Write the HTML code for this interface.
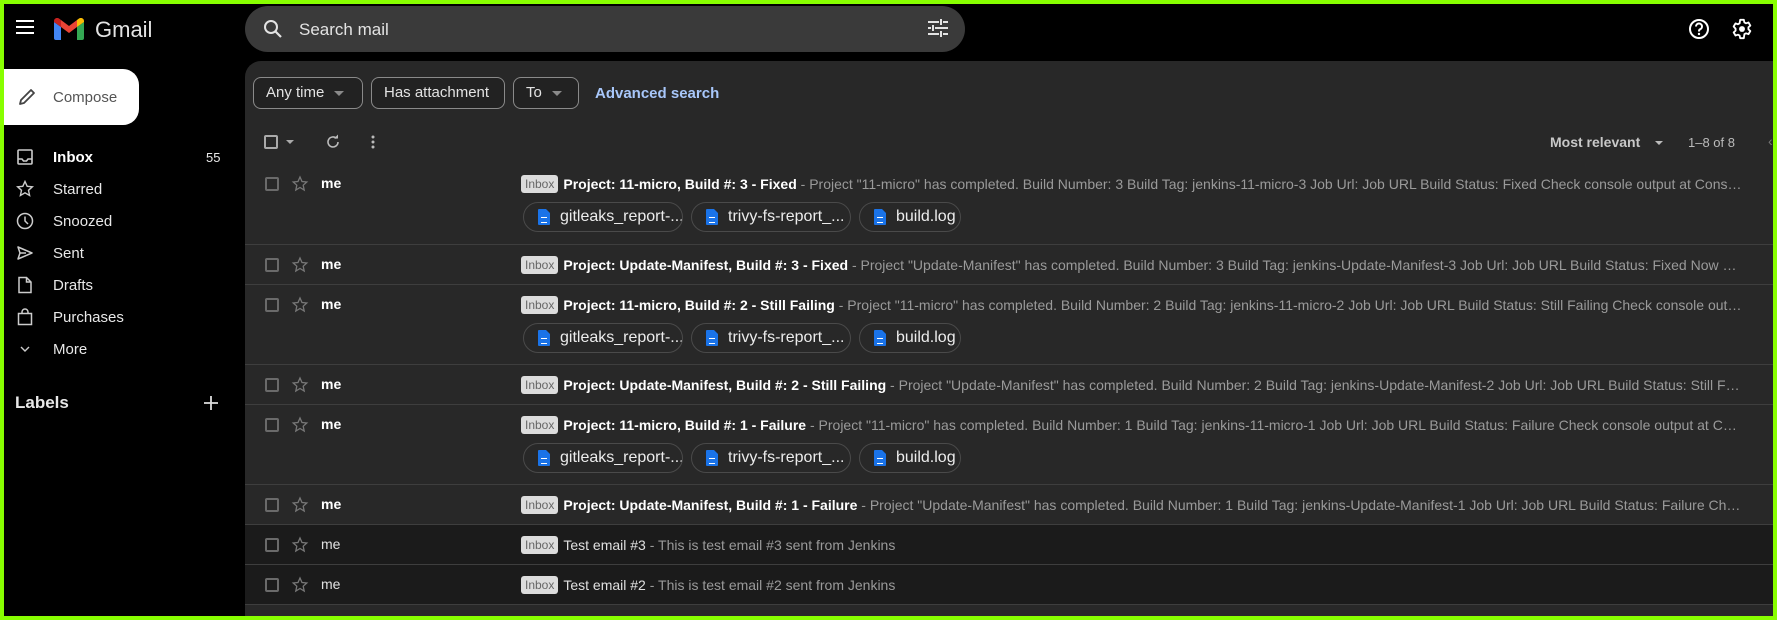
<!DOCTYPE html>
<html><head><meta charset="utf-8"><style>
*{box-sizing:border-box;margin:0;padding:0}
body{width:1777px;height:620px;background:#88ff00;position:relative;overflow:hidden;font-family:"Liberation Sans",Arial,sans-serif}
#app{position:absolute;left:4px;top:4px;width:1769px;height:612px;background:#000;overflow:hidden}
.a{position:absolute}
svg{display:block}
.nav{position:absolute;left:0;height:32px;width:240px;color:#e8e8e8;font-size:15px;line-height:32px}
.nav svg{position:absolute;left:12px;top:6px}
.nav span{position:absolute;left:49px}
#panel{position:absolute;left:241px;top:57px;width:1528px;height:560px;background:#282828;border-radius:16px 0 0 0}
.chip{position:absolute;top:16px;height:32px;border:1px solid #8a8a8a;border-radius:8px;background:#222;color:#e3e3e3;font-size:15px;line-height:30px;padding-left:12px}
.tri{position:absolute;width:0;height:0;border-left:5px solid transparent;border-right:5px solid transparent;border-top:5px solid #8a8a8a}
.row{position:absolute;left:0;width:1528px;border-top:1px solid #3e3e3e;background:#282828}
.row.r{background:#1b1b1b}
.cb{position:absolute;left:20px;top:13px;width:14px;height:14px;border:2px solid #6a6a6a;border-radius:2px}
.st{position:absolute;left:46px;top:11px}
.fr{position:absolute;left:76px;top:11px;font-size:14px;color:#fff;font-weight:bold}
.r .fr{font-weight:normal;color:#e0e0e0}
.ln{position:absolute;left:276px;top:10px;width:1222px;white-space:nowrap;overflow:hidden;text-overflow:ellipsis;font-size:14px;color:#9a9a9a;line-height:20px}
.lb{display:inline-block;background:#dcdcdc;color:#666;border-radius:3px;font-size:12px;line-height:18px;padding:0 4px;margin-right:5px;vertical-align:1px}
.ln b{color:#fff}
.r .ln .s{color:#e0e0e0}
.att{position:absolute;top:38px;height:30px;border:1px solid #4a4a4a;border-radius:15px;color:#ececec;font-size:16px;line-height:28px;padding-left:36px;white-space:nowrap;overflow:hidden}
.att i{position:absolute;left:14px;top:6px;width:12px;height:16px;background:#1a73e8;border-radius:1px}
.att i:before{content:"";position:absolute;right:0;top:0;border-left:4px solid #1a73e8;border-top:4px solid #282828}
.att i:after{content:"";position:absolute;left:3px;top:8px;width:6px;height:4px;border-top:1.5px solid #fff;border-bottom:1.5px solid #fff}
</style></head><body><div id="app">
<svg class="a" style="left:12px;top:16px" width="18" height="14"><path d="M0 1h18M0 7h18M0 13h18" stroke="#fff" stroke-width="2"/></svg>
<svg class="a" style="left:50px;top:14px" width="30" height="22" viewBox="0 0 30 22"><path d="M0 4v16a2 2 0 0 0 2 2h5V9z" fill="#4285f4"/><path d="M23 22h5a2 2 0 0 0 2-2V4l-7 5z" fill="#34a853"/><path d="M23 2v7l7-5V3c0-2.5-3-4-5-2.5z" fill="#fbbc04"/><path d="M7 9V2l8 6 8-6v7l-8 6z" fill="#ea4335"/><path d="M0 3v1l7 5V2L5 .5C3-1 0 .5 0 3z" fill="#c5221f"/></svg>
<div class="a" style="left:91px;top:13px;color:#e3e3e3;font-size:22px">Gmail</div>
<div class="a" style="left:241px;top:2px;width:720px;height:46px;background:#3a3a3a;border-radius:23px"></div>
<svg class="a" style="left:259px;top:15px" width="20" height="20"><circle cx="8" cy="8" r="6" fill="none" stroke="#e3e3e3" stroke-width="2"/><path d="M12.5 12.5L18 18" stroke="#e3e3e3" stroke-width="2.2"/></svg>
<div class="a" style="left:295px;top:16px;color:#e3e3e3;font-size:17px">Search mail</div>
<svg class="a" style="left:924px;top:15px" width="20" height="18"><path d="M0 3h11M15 3h5M13 0v6M0 9h3M7 9h13M5 6v6M0 15h11M15 15h5M13 12v6" stroke="#e3e3e3" stroke-width="2"/></svg>
<svg class="a" style="left:1684px;top:14px" width="22" height="22"><circle cx="11" cy="11" r="9" fill="none" stroke="#fff" stroke-width="2"/><path d="M8 8.5a3 3 0 1 1 4 2.8c-1 .5-1 1-1 2.2" fill="none" stroke="#fff" stroke-width="2"/><circle cx="11" cy="16" r="1.2" fill="#fff"/></svg>
<svg class="a" style="left:1727px;top:14px" width="22" height="22" viewBox="0 0 24 24"><path d="M10 2h4l.6 2.8 1.8 1 2.7-.9 2 3.4-2.1 1.9v2.1l2.1 1.9-2 3.4-2.7-.9-1.8 1L14 22h-4l-.6-2.8-1.8-1-2.7.9-2-3.4 2.1-1.9v-2.1L2.9 9.3l2-3.4 2.7.9 1.8-1z" fill="none" stroke="#fff" stroke-width="2" stroke-linejoin="round"/><circle cx="12" cy="12" r="3.2" fill="#fff"/></svg>
<div class="a" style="left:-4px;top:65px;width:139px;height:56px;background:#fff;border-radius:0 16px 16px 0"></div>
<svg class="a" style="left:14px;top:84px" width="18" height="18"><path d="M2 16l1-4L13 2l3 3L6 15z" fill="none" stroke="#444" stroke-width="1.8" stroke-linejoin="round"/></svg>
<div class="a" style="left:49px;top:85px;color:#555;font-size:15px">Compose</div>
<div class="nav" style="top:138px"><svg width="18" height="18"><rect x="2" y="2" width="14" height="14" rx="1" fill="none" stroke="#ccc" stroke-width="1.6"/><path d="M2 11h4l1.5 2h3l1.5-2h4" fill="none" stroke="#ccc" stroke-width="1.6"/></svg><span style="font-weight:bold;color:#fff">Inbox</span><span style="left:202px;font-size:13px">55</span></div>
<div class="nav" style="top:170px"><svg width="18" height="18"><path d="M9 1.5l2.2 4.8 5.2.5-3.9 3.5 1.1 5.2L9 12.8l-4.6 2.7 1.1-5.2L1.6 6.8l5.2-.5z" fill="none" stroke="#ccc" stroke-width="1.4"/></svg><span>Starred</span></div>
<div class="nav" style="top:202px"><svg width="18" height="18"><circle cx="9" cy="9" r="7.5" fill="none" stroke="#ccc" stroke-width="1.5"/><path d="M9 4.5V9l3 3" fill="none" stroke="#ccc" stroke-width="1.5"/></svg><span>Snoozed</span></div>
<div class="nav" style="top:234px"><svg width="18" height="18"><path d="M2 3l14 6-14 6 2-6z M4 9h6" fill="none" stroke="#ccc" stroke-width="1.5" stroke-linejoin="round"/></svg><span>Sent</span></div>
<div class="nav" style="top:266px"><svg width="18" height="18"><path d="M3 1.5h7.5l4.5 4.5v10.5H3z M10.5 1.5V6H15" fill="none" stroke="#ccc" stroke-width="1.5"/></svg><span>Drafts</span></div>
<div class="nav" style="top:298px"><svg width="18" height="18"><path d="M2.5 5.5h13v11h-13z M6 5.5V4a3 3 0 0 1 6 0v1.5" fill="none" stroke="#ccc" stroke-width="1.5"/></svg><span>Purchases</span></div>
<div class="nav" style="top:330px"><svg width="18" height="18"><path d="M5 7l4 4 4-4" fill="none" stroke="#ccc" stroke-width="1.4"/></svg><span>More</span></div>
<div class="a" style="left:11px;top:389px;color:#e8e8e8;font-size:17px;font-weight:bold">Labels</div>
<svg class="a" style="left:200px;top:392px" width="14" height="14"><path d="M7 0v14M0 7h14" stroke="#ddd" stroke-width="1.8"/></svg>
<div id="panel">
<div class="chip" style="left:8px;width:110px">Any time<div class="tri" style="left:80px;top:13px"></div></div>
<div class="chip" style="left:126px;width:134px">Has attachment</div>
<div class="chip" style="left:268px;width:66px">To<div class="tri" style="left:38px;top:13px"></div></div>
<div class="a" style="left:350px;top:24px;color:#a8c7fa;font-size:15px;font-weight:bold">Advanced search</div>
<div class="a" style="left:19px;top:74px;width:14px;height:14px;border:2px solid #aaa;border-radius:2px"></div>
<div class="tri" style="left:41px;top:79px;border-top-color:#aaa;border-width:4px 4px 0"></div>
<svg class="a" style="left:80px;top:73px" width="16" height="16"><path d="M13 8a5 5 0 1 1-1.5-3.6" fill="none" stroke="#bbb" stroke-width="1.6"/><path d="M9 4.5h4v-4z" fill="#bbb"/></svg>
<svg class="a" style="left:126px;top:73px" width="4" height="16"><circle cx="2" cy="3" r="1.5" fill="#bbb"/><circle cx="2" cy="8" r="1.5" fill="#bbb"/><circle cx="2" cy="13" r="1.5" fill="#bbb"/></svg>
<div class="a" style="left:1305px;top:73px;color:#c8c8c8;font-size:14px;font-weight:bold">Most relevant</div>
<div class="tri" style="left:1410px;top:80px;border-top-color:#bbb;border-width:4px 4px 0"></div>
<div class="a" style="left:1443px;top:74px;color:#bbb;font-size:13px">1–8 of 8</div>
<div class="a" style="left:1523px;top:72px;color:#777;font-size:14px">‹</div>

<div class="row" style="top:103px;height:80px;border-top:none"><div class="cb"></div><svg class="st" width="18" height="18"><path d="M9 2l2 4.5 4.8.5-3.6 3.2 1 4.8L9 12.5 4.8 15l1-4.8L2.2 7l4.8-.5z" fill="none" stroke="#777" stroke-width="1.3"/></svg><div class="fr">me</div><div class="ln"><span class="lb">Inbox</span><b>Project: 11-micro, Build #: 3 - Fixed</b> - Project "11-micro" has completed. Build Number: 3 Build Tag: jenkins-11-micro-3 Job Url: Job URL Build Status: Fixed Check console output at Console Output to view the results. Changes</div>
<div class="att" style="left:278px;width:160px"><i></i>gitleaks_report-...</div><div class="att" style="left:446px;width:160px"><i></i>trivy-fs-report_...</div><div class="att" style="left:614px;width:102px"><i></i>build.log</div></div>

<div class="row" style="top:183px;height:40px"><div class="cb"></div><svg class="st" width="18" height="18"><path d="M9 2l2 4.5 4.8.5-3.6 3.2 1 4.8L9 12.5 4.8 15l1-4.8L2.2 7l4.8-.5z" fill="none" stroke="#777" stroke-width="1.3"/></svg><div class="fr">me</div><div class="ln"><span class="lb">Inbox</span><b>Project: Update-Manifest, Build #: 3 - Fixed</b> - Project "Update-Manifest" has completed. Build Number: 3 Build Tag: jenkins-Update-Manifest-3 Job Url: Job URL Build Status: Fixed Now check the results</div></div>

<div class="row" style="top:223px;height:80px"><div class="cb"></div><svg class="st" width="18" height="18"><path d="M9 2l2 4.5 4.8.5-3.6 3.2 1 4.8L9 12.5 4.8 15l1-4.8L2.2 7l4.8-.5z" fill="none" stroke="#777" stroke-width="1.3"/></svg><div class="fr">me</div><div class="ln"><span class="lb">Inbox</span><b>Project: 11-micro, Build #: 2 - Still Failing</b> - Project "11-micro" has completed. Build Number: 2 Build Tag: jenkins-11-micro-2 Job Url: Job URL Build Status: Still Failing Check console output at Console</div>
<div class="att" style="left:278px;width:160px"><i></i>gitleaks_report-...</div><div class="att" style="left:446px;width:160px"><i></i>trivy-fs-report_...</div><div class="att" style="left:614px;width:102px"><i></i>build.log</div></div>

<div class="row" style="top:303px;height:40px"><div class="cb"></div><svg class="st" width="18" height="18"><path d="M9 2l2 4.5 4.8.5-3.6 3.2 1 4.8L9 12.5 4.8 15l1-4.8L2.2 7l4.8-.5z" fill="none" stroke="#777" stroke-width="1.3"/></svg><div class="fr">me</div><div class="ln"><span class="lb">Inbox</span><b>Project: Update-Manifest, Build #: 2 - Still Failing</b> - Project "Update-Manifest" has completed. Build Number: 2 Build Tag: jenkins-Update-Manifest-2 Job Url: Job URL Build Status: Still Failing</div></div>

<div class="row" style="top:343px;height:80px"><div class="cb"></div><svg class="st" width="18" height="18"><path d="M9 2l2 4.5 4.8.5-3.6 3.2 1 4.8L9 12.5 4.8 15l1-4.8L2.2 7l4.8-.5z" fill="none" stroke="#777" stroke-width="1.3"/></svg><div class="fr">me</div><div class="ln"><span class="lb">Inbox</span><b>Project: 11-micro, Build #: 1 - Failure</b> - Project "11-micro" has completed. Build Number: 1 Build Tag: jenkins-11-micro-1 Job Url: Job URL Build Status: Failure Check console output at Console Output</div>
<div class="att" style="left:278px;width:160px"><i></i>gitleaks_report-...</div><div class="att" style="left:446px;width:160px"><i></i>trivy-fs-report_...</div><div class="att" style="left:614px;width:102px"><i></i>build.log</div></div>

<div class="row" style="top:423px;height:40px"><div class="cb"></div><svg class="st" width="18" height="18"><path d="M9 2l2 4.5 4.8.5-3.6 3.2 1 4.8L9 12.5 4.8 15l1-4.8L2.2 7l4.8-.5z" fill="none" stroke="#777" stroke-width="1.3"/></svg><div class="fr">me</div><div class="ln"><span class="lb">Inbox</span><b>Project: Update-Manifest, Build #: 1 - Failure</b> - Project "Update-Manifest" has completed. Build Number: 1 Build Tag: jenkins-Update-Manifest-1 Job Url: Job URL Build Status: Failure Check</div></div>

<div class="row r" style="top:463px;height:40px"><div class="cb"></div><svg class="st" width="18" height="18"><path d="M9 2l2 4.5 4.8.5-3.6 3.2 1 4.8L9 12.5 4.8 15l1-4.8L2.2 7l4.8-.5z" fill="none" stroke="#777" stroke-width="1.3"/></svg><div class="fr">me</div><div class="ln"><span class="lb">Inbox</span><span class="s">Test email #3</span> - This is test email #3 sent from Jenkins</div></div>

<div class="row r" style="top:503px;height:40px"><div class="cb"></div><svg class="st" width="18" height="18"><path d="M9 2l2 4.5 4.8.5-3.6 3.2 1 4.8L9 12.5 4.8 15l1-4.8L2.2 7l4.8-.5z" fill="none" stroke="#777" stroke-width="1.3"/></svg><div class="fr">me</div><div class="ln"><span class="lb">Inbox</span><span class="s">Test email #2</span> - This is test email #2 sent from Jenkins</div></div>
<div class="row" style="top:543px;height:20px"></div>
</div>
</div></body></html>
